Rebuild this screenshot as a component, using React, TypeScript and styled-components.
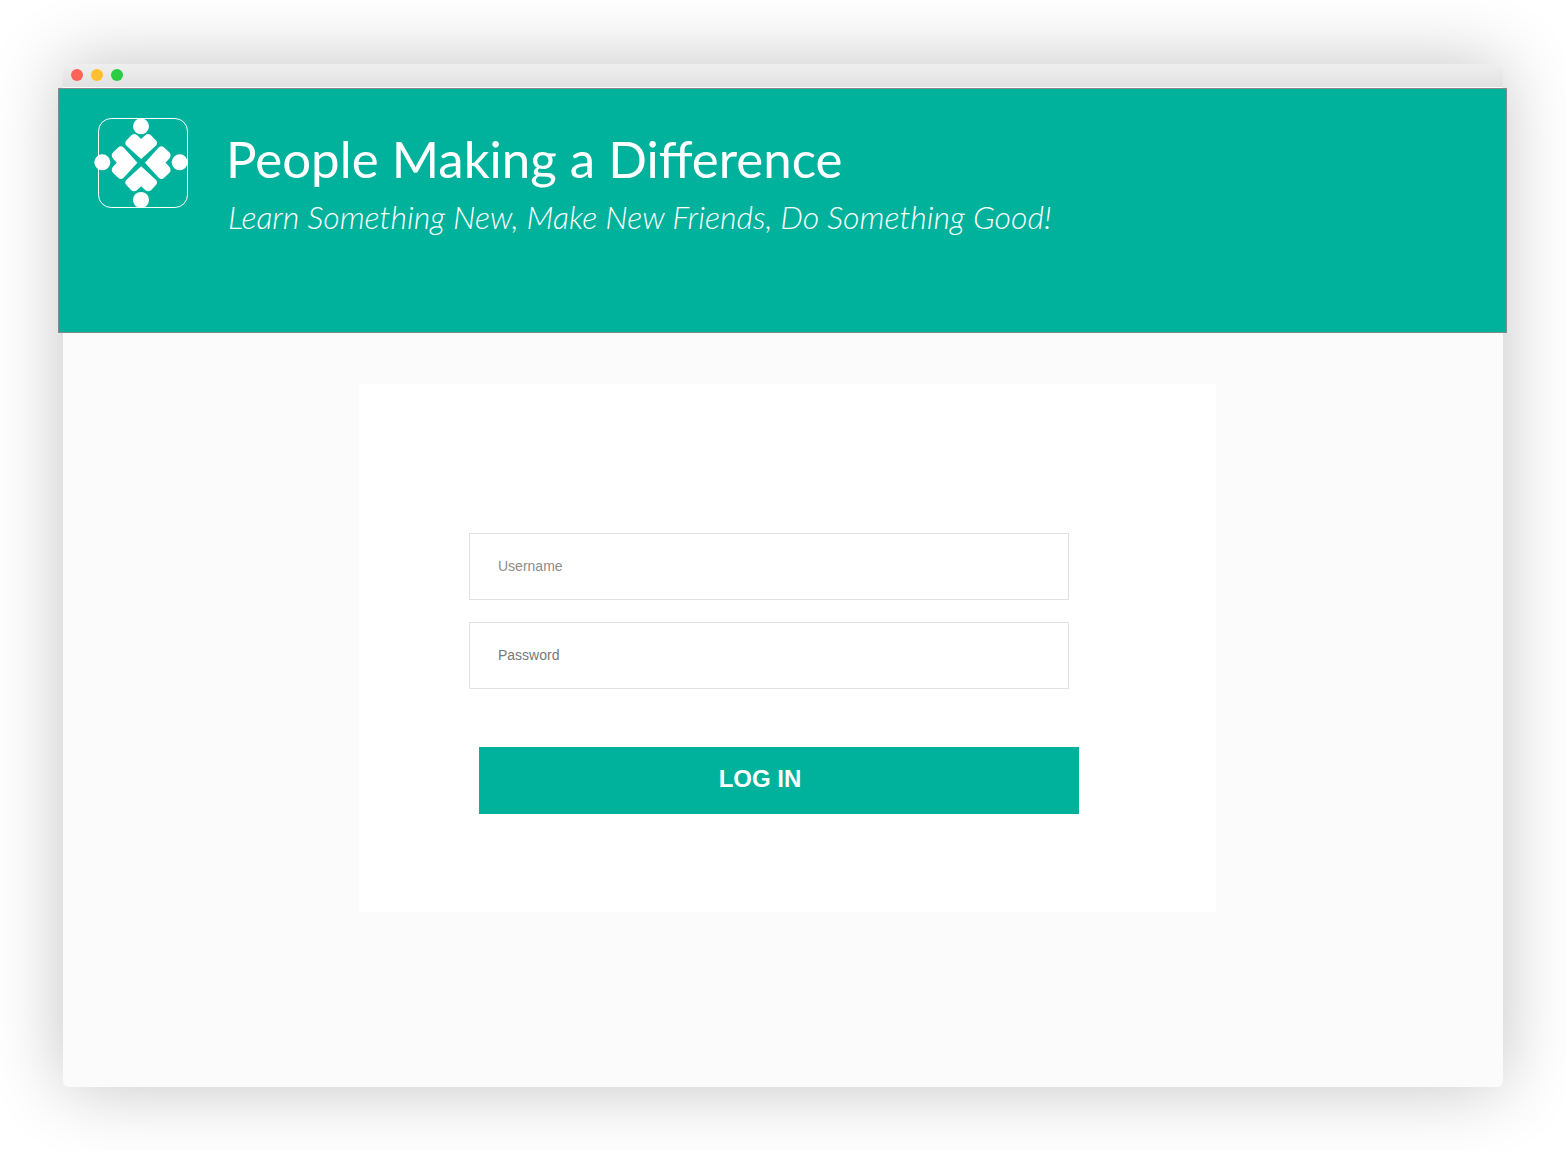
import React from 'react';
import styled, { createGlobalStyle } from 'styled-components';

const teal = '#00b29c';
const ui = '"Liberation Sans", Arial, sans-serif';
const display = 'Lato, "Open Sans", sans-serif';

const GlobalStyle = createGlobalStyle`
  *, *::before, *::after { box-sizing: border-box; }
  body { margin: 0; background: #fff; font-family: ${ui}; }
`;

const Desktop = styled.div`
  min-height: 100vh;
  display: flex;
  padding: 64px 63px 63px;
`;

const Window = styled.div`
  flex: 1;
  min-width: 0;
  display: flex;
  flex-direction: column;
  background: #fbfbfb;
  border-radius: 6px;
  box-shadow: 0 0 72px rgba(0, 0, 0, 0.24);
`;

const TitleBar = styled.div`
  height: 24px;
  flex: none;
  display: flex;
  align-items: center;
  gap: 8px;
  padding: 0 8px 2px;
  border-bottom: 1px solid #fbfbfb;
  border-radius: 6px 6px 0 0;
  background: linear-gradient(#f0eff0, #e2e1e2);
`;

const Light = styled.span<{ $color: string }>`
  width: 12px;
  height: 12px;
  border-radius: 50%;
  background: ${(p) => p.$color};
`;

const Banner = styled.header`
  display: flex;
  align-items: flex-start;
  gap: 36px;
  min-height: 245px;
  margin: 0 -4px 0 -5px;
  padding: 28px 35px;
  border: 1px solid #7f8c8a;
  background: ${teal};
  color: #fff;
`;

const Mark = styled.svg`
  flex: none;
  width: 96px;
  height: 92px;
`;

const Headings = styled.div`
  padding-top: 12px;
  font-family: ${display};
`;

const Title = styled.h1`
  margin: 0;
  font-size: 51px;
  line-height: 60px;
  font-weight: 400;
`;

const Tagline = styled.p`
  margin: 0;
  padding: 8px 0 0 2px;
  font-size: 32px;
  line-height: 40px;
  font-weight: 300;
  font-style: italic;
`;

const Main = styled.main`
  flex: 1;
  display: flex;
  align-items: flex-start;
  padding: 51px 287px 64px 296px;
`;

const Card = styled.form`
  flex: 1;
  min-width: 0;
  display: flex;
  flex-direction: column;
  padding: 149px 137px 98px 110px;
  background: #fff;
`;

const Fields = styled.div`
  display: grid;
  gap: 22px;
  padding-right: 10px;
`;

const Field = styled.input<{ $strong?: boolean }>`
  width: 100%;
  height: 67px;
  padding: 0 28px 2px;
  border: 1px solid #e1e1e1;
  border-radius: 0;
  background: #fff;
  color: #333;
  font-family: ${ui};
  font-size: 14px;
  &::placeholder {
    color: ${(p) => (p.$strong ? '#777' : '#8c8c8c')};
    opacity: 1;
  }
`;

const Actions = styled.div`
  display: grid;
  padding: 58px 0 0 10px;
`;

const Submit = styled.button`
  height: 67px;
  padding: 0 38px 4px 0;
  border: 0;
  background: ${teal};
  color: #fff;
  font-family: ${ui};
  font-size: 24px;
  font-weight: 700;
  cursor: pointer;
`;

const heart =
  'M0 -11 L-44 -51 Q-51 -59 -45 -66 L-31 -81 Q-22 -90 -12 -82 L0 -71 L12 -82 Q22 -90 31 -81 L45 -66 Q51 -59 44 -51 Z';

const hearts = [
  { turn: 0, scale: 1 },
  { turn: 90, scale: 1.03 },
  { turn: 180, scale: 1 },
  { turn: 270, scale: 1.03 },
];

function Logo() {
  return (
    <Mark viewBox="27 36 288 276" fill="#fff" aria-hidden="true">
      <rect x="40.5" y="40.5" width="267" height="267" rx="38" fill="none" stroke="#fff" strokeWidth="3" />
      {hearts.map(({ turn, scale }) => (
        <path key={turn} d={heart} transform={`translate(168.5 173) rotate(${turn}) scale(${scale})`} />
      ))}
      <circle cx="168" cy="64" r="24" />
      <circle cx="52" cy="172" r="24" />
      <circle cx="284" cy="172" r="24" />
      <circle cx="168" cy="285" r="24" />
    </Mark>
  );
}

export default function App() {
  return (
    <>
      <GlobalStyle />
      <Desktop>
        <Window>
          <TitleBar>
            <Light $color="#ff6259" />
            <Light $color="#ffbf2f" />
            <Light $color="#29cc42" />
          </TitleBar>
          <Banner>
            <Logo />
            <Headings>
              <Title>People Making a Difference</Title>
              <Tagline>Learn Something New, Make New Friends, Do Something Good!</Tagline>
            </Headings>
          </Banner>
          <Main>
            <Card onSubmit={(e: React.FormEvent) => e.preventDefault()}>
              <Fields>
                <Field type="text" name="username" placeholder="Username" aria-label="Username" />
                <Field $strong type="password" name="password" placeholder="Password" aria-label="Password" />
              </Fields>
              <Actions>
                <Submit type="submit">LOG IN</Submit>
              </Actions>
            </Card>
          </Main>
        </Window>
      </Desktop>
    </>
  );
}
